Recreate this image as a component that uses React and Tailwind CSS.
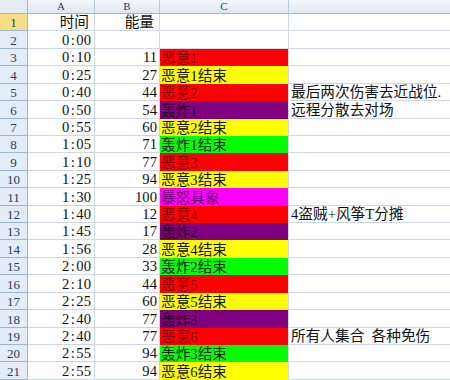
import React from "react";

const rows = [
  ["时间", "能量", "", "", ""],
  ["0:00", "", "", "w", ""],
  ["0:10", "11", "恶意1", "r", ""],
  ["0:25", "27", "恶意1结束", "y", ""],
  ["0:40", "44", "恶意2", "r", "最后两次伤害去近战位."],
  ["0:50", "54", "轰炸1", "p", "远程分散去对场"],
  ["0:55", "60", "恶意2结束", "y", ""],
  ["1:05", "71", "轰炸1结束", "g", ""],
  ["1:10", "77", "恶意3", "r", ""],
  ["1:25", "94", "恶意3结束", "y", ""],
  ["1:30", "100", "暴怒具象", "m", ""],
  ["1:40", "12", "恶意4", "r", "4盗贼+风筝T分摊"],
  ["1:45", "17", "轰炸2", "p", ""],
  ["1:56", "28", "恶意4结束", "y", ""],
  ["2:00", "33", "轰炸2结束", "g", ""],
  ["2:10", "44", "恶意5", "r", ""],
  ["2:25", "60", "恶意5结束", "y", ""],
  ["2:40", "77", "轰炸3", "p", ""],
  ["2:40", "77", "恶意6", "r", "所有人集合  各种免伤"],
  ["2:55", "94", "轰炸3结束", "g", ""],
  ["2:55", "94", "恶意6结束", "y", ""],
];

const fill = {
  "": "bg-white border-b border-r border-[#d0d7e5]",
  w: "bg-white border-b border-r border-[#d0d7e5]",
  r: "bg-[#ff0000] text-[#7a0000] border-r border-[#d0d7e5]",
  y: "bg-[#ffff00] text-[#111111] border-r border-[#d0d7e5]",
  p: "bg-[#800080] text-[#2a002a] border-r border-[#d0d7e5]",
  g: "bg-[#00ff00] text-[#102010] border-r border-[#d0d7e5]",
  m: "bg-[#ff00ff] text-[#700070] border-r border-[#d0d7e5]",
};

const font = { fontFamily: '"Liberation Serif", "Noto Sans CJK SC", serif' };

function Time({ v }) {
  if (!v.includes(":")) return v;
  const [h, m] = v.split(":");
  return (
    <span className="flex">
      <span>{h}</span>
      <span className="inline-block w-[7px] text-center">:</span>
      <span>{m}</span>
    </span>
  );
}

export default function App() {
  return (
    <div className="w-[450px] h-[380px] overflow-hidden bg-white text-[14.67px] text-[#111]" style={font}>
      <div className="grid grid-cols-[28px_67px_65px_129px_1fr] h-[14px] bg-gradient-to-b from-[#f4f7fb] to-[#dee6f1] border-b border-[#9eb6ce] text-[11px] leading-[13px] text-[#27415f]">
        <div className="border-r border-[#9eb6ce] bg-[#e6ecf4]"></div>
        <div className="border-r border-[#b7c8db] text-center">A</div>
        <div className="border-r border-[#b7c8db] text-center">B</div>
        <div className="border-r border-[#b7c8db] text-center">C</div>
        <div className="text-center"></div>
      </div>
      {rows.map((r, i) => (
        <div key={i} className="grid grid-cols-[28px_67px_65px_129px_1fr] h-[17.43px]">
          <div
            className={`flex items-end justify-center border-r border-b border-[#9eb6ce] text-[13px] leading-[15px] text-[#27415f] ${
              i === 0 ? "bg-[#f8dc8a]" : "bg-[#e4ecf7]"
            }`}
          >
            {i + 1}
          </div>
          <div
            className={`flex items-end justify-end border-b border-r border-[#d0d7e5] leading-[16px] ${
              i === 0 ? "pr-[5px]" : "pr-[3px]"
            }`}
          >
            {i === 0 ? r[0] : <Time v={r[0]} />}
          </div>
          <div
            className={`flex items-end justify-end border-b border-r border-[#d0d7e5] leading-[16px] ${
              i === 0 ? "pr-[5px]" : "pr-[2px]"
            }`}
          >
            {r[1]}
          </div>
          <div className={`flex items-end leading-[16px] pl-px whitespace-nowrap overflow-hidden ${fill[r[3]]}`}>
            {r[2]}
          </div>
          <div className="flex items-end border-b border-[#d0d7e5] leading-[16px] pl-[2px] whitespace-pre overflow-visible">
            {r[4]}
          </div>
        </div>
      ))}
    </div>
  );
}
